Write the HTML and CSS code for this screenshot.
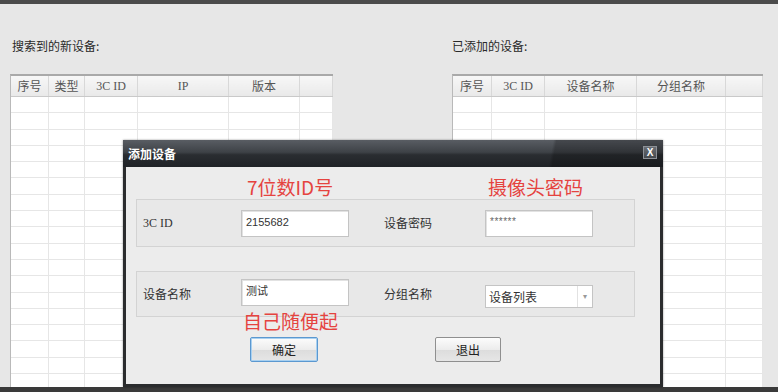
FILE: index.html
```html
<!DOCTYPE html>
<html lang="zh-CN">

<head>
  <meta charset="UTF-8">
  <meta name="viewport" content="width=device-width, initial-scale=1.0">
  <link rel="stylesheet" href="styles.css">
</head>

<body>
  <div class="top-bar"></div>

  <div class="main">
    <div class="panel panel-left">
      <div class="panel-title">搜索到的新设备:</div>
      <div class="grid-box">
        <table class="grid grid-found">
          <thead>
            <tr><th>序号</th><th>类型</th><th>3C ID</th><th>IP</th><th>版本</th><th></th></tr>
          </thead>
          <tbody class="grid-body" data-cols="6"></tbody>
        </table>
      </div>
    </div>

    <div class="panel panel-right">
      <div class="panel-title">已添加的设备:</div>
      <div class="grid-box">
        <table class="grid grid-added">
          <thead>
            <tr><th>序号</th><th>3C ID</th><th>设备名称</th><th>分组名称</th><th></th></tr>
          </thead>
          <tbody class="grid-body" data-cols="5"></tbody>
        </table>
      </div>
    </div>
  </div>

  <div class="bottom-bar"></div>

  <!-- add device dialog, sits over the two lists -->
  <div class="dialog">
    <div class="dialog-title">
      <span>添加设备</span>
      <span class="dialog-close">X</span>
    </div>
    <div class="dialog-body">
      <div class="note-row">
        <span class="note note-a">7位数ID号</span>
        <span class="note note-b">摄像头密码</span>
      </div>

      <div class="field-group">
        <span class="field-label">3C ID</span>
        <div class="text-input">2155682</div>
        <span class="field-label field-label-2">设备密码</span>
        <div class="text-input password">******</div>
      </div>

      <div class="field-group field-group-2">
        <span class="field-label">设备名称</span>
        <div class="text-input">测试</div>
        <span class="field-label field-label-2">分组名称</span>
        <div class="select-box">
          <span class="select-text">设备列表</span>
          <span class="select-arrow">▾</span>
        </div>
      </div>

      <div class="note-row note-row-2">
        <span class="note note-c">自己随便起</span>
      </div>

      <div class="button-row">
        <button class="btn btn-primary">确定</button>
        <button class="btn btn-exit">退出</button>
      </div>
    </div>
  </div>

  <script>
    // fill the empty list rows
    const bodies = document.querySelectorAll('.grid-body');
    bodies.forEach(function (tbody) {
      const cols = parseInt(tbody.dataset.cols, 10);
      for (let r = 0; r < 19; r++) {
        const tr = document.createElement('tr');
        for (let c = 0; c < cols; c++) {
          tr.appendChild(document.createElement('td'));
        }
        tbody.appendChild(tr);
      }
    });
  </script>
</body>

</html>
```

FILE: styles.css
```css
body {
  margin: 0;
  width: 778px;
  height: 392px;
  overflow: hidden;
  background-color: #e7e7e7;
  font-family: "Liberation Serif", "Noto Sans CJK SC", serif;
  font-size: 12px;
  color: #333;
  display: flex;
  flex-direction: column;
  position: relative;
}

.top-bar {
  height: 4px;
  background-color: #4b4b4b;
}

.bottom-bar {
  height: 5px;
  background-color: #3a3a3a;
}

.main {
  flex: 1;
  display: flex;
  gap: 119px;
  padding-left: 10px;
  overflow: hidden;
}

.panel {
  display: flex;
  flex-direction: column;
}

.panel-left {
  width: 323px;
}

.panel-right {
  width: 311px;
}

.panel-title {
  margin-top: 34px;
  margin-bottom: 20px;
  height: 16px;
  line-height: 16px;
  padding-left: 2px;
  font-family: "Noto Sans CJK SC", sans-serif;
  color: #2a2a2a;
}

.panel-right .panel-title {
  padding-left: 0;
}

.grid-box {
  flex: 1;
  background-color: #fff;
  border-top: 2px solid #a9a9a9;
  border-left: 1px solid #b9b9b9;
  overflow: hidden;
}

.grid {
  width: 100%;
  border-collapse: collapse;
  table-layout: fixed;
}

.grid th {
  height: 20px;
  padding: 0;
  font-weight: normal;
  font-size: 12px;
  color: #555;
  background: linear-gradient(#f7f7f7, #e9e9e9);
  border-right: 1px solid #d8d8d8;
  border-bottom: 1px solid #c9c9c9;
  white-space: nowrap;
}

.grid td {
  height: 15.3px;
  padding: 0;
  border-right: 1px solid #e6e6e6;
  border-bottom: 1px solid #e6e6e6;
}

/* column widths */
.grid-found th:nth-child(1) { width: 37px; }
.grid-found th:nth-child(2) { width: 35px; }
.grid-found th:nth-child(3) { width: 52px; }
.grid-found th:nth-child(4) { width: 90px; }
.grid-found th:nth-child(5) { width: 70px; }

.grid-added th:nth-child(1) { width: 38px; }
.grid-added th:nth-child(2) { width: 52px; }
.grid-added th:nth-child(3) { width: 91px; }
.grid-added th:nth-child(4) { width: 88px; }

/* dialog */
.dialog {
  position: absolute;
  left: 123px;
  top: 140px;
  width: 540px;
  height: 247px;
  box-sizing: border-box;
  padding: 0 3px 3px;
  background-color: #2b2c2e;
  display: flex;
  flex-direction: column;
  box-shadow: 0 0 2px rgba(0, 0, 0, 0.4);
}

.dialog-title {
  height: 27px;
  margin: 0 -3px;
  padding: 0 6px 0 5px;
  display: flex;
  align-items: center;
  justify-content: space-between;
  background:
    linear-gradient(100deg, transparent 79%, rgba(0, 0, 0, 0.22) 79.6%),
    linear-gradient(#595d63, #3e4247 45%, #2a2d31 55%, #202327);
  color: #fff;
  font-family: "Noto Sans CJK SC", sans-serif;
  font-weight: bold;
  font-size: 12px;
}

.dialog-close {
  width: 12px;
  height: 11px;
  margin-top: -2px;
  border: 1px solid #8d9197;
  background: linear-gradient(#6a6e74, #45494e);
  font-family: "Liberation Sans", sans-serif;
  font-size: 10px;
  line-height: 11px;
  text-align: center;
  font-weight: bold;
}

.dialog-body {
  flex: 1;
  background-color: #ececec;
  padding: 0 25px 0 10px;
  display: flex;
  flex-direction: column;
}

.note-row {
  display: grid;
  grid-template-columns: 104px 108px 136px 108px;
  height: 32px;
  align-items: end;
  line-height: 24px;
}

.note {
  color: #e5433f;
  font-family: "Noto Sans CJK SC", sans-serif;
  font-size: 19px;
  white-space: nowrap;
}

.note-a {
  grid-column: 2;
  padding-left: 7px;
}

.note-b {
  grid-column: 4;
  padding-left: 4px;
}

.note-row-2 {
  height: 22px;
  line-height: 22px;
  margin-top: -7px;
  position: relative;
}

.note-c {
  grid-column: 2;
  padding-left: 3px;
}

.field-group {
  display: grid;
  grid-template-columns: 104px 108px 136px 108px;
  align-items: center;
  height: 48px;
  box-sizing: border-box;
  border: 1px solid #d3d3d3;
  background-color: #e8e8e8;
}

.field-group-2 {
  height: 46px;
  margin-top: 24px;
}

.field-label {
  padding-left: 6px;
  color: #333;
  white-space: nowrap;
}

.field-label-2 {
  padding-left: 35px;
}

.text-input {
  height: 27px;
  box-sizing: border-box;
  padding: 3px 4px 0;
  line-height: 16px;
  background-color: #fff;
  border: 1px solid #c4c4c4;
  box-shadow: inset 1px 1px 0 #e2e2e2;
  font-family: "Liberation Sans", "Noto Sans CJK SC", sans-serif;
  font-size: 11px;
  color: #333;
}

.password {
  font-size: 10px;
  color: #666;
  letter-spacing: 0.5px;
}

.field-group-2 .text-input {
  margin-bottom: 4px;
}

.select-box {
  height: 23px;
  margin-top: 4px;
  box-sizing: border-box;
  display: flex;
  align-items: center;
  justify-content: space-between;
  background-color: #fff;
  border: 1px solid #c4c4c4;
}

.select-text {
  padding-left: 3px;
  font-family: "Noto Sans CJK SC", sans-serif;
  font-size: 12px;
  color: #333;
}

.select-arrow {
  width: 14px;
  height: 100%;
  border-left: 1px solid #e2e2e2;
  color: #999;
  font-size: 8px;
  line-height: 21px;
  text-align: center;
}

.button-row {
  display: flex;
  gap: 117px;
  margin-top: 5px;
  padding-left: 114px;
}

.btn {
  width: 68px;
  height: 25px;
  padding: 0;
  border: 1px solid #8f8f8f;
  border-radius: 2px;
  background: linear-gradient(#fcfcfc, #ececec 50%, #dcdcdc 51%, #e6e6e6);
  font-family: "Noto Sans CJK SC", sans-serif;
  font-size: 12px;
  color: #222;
}

.btn-primary {
  border-color: #5b98d0;
  box-shadow: inset 0 0 0 1px #a8d0f0;
}

.btn-exit {
  width: 66px;
}
```
